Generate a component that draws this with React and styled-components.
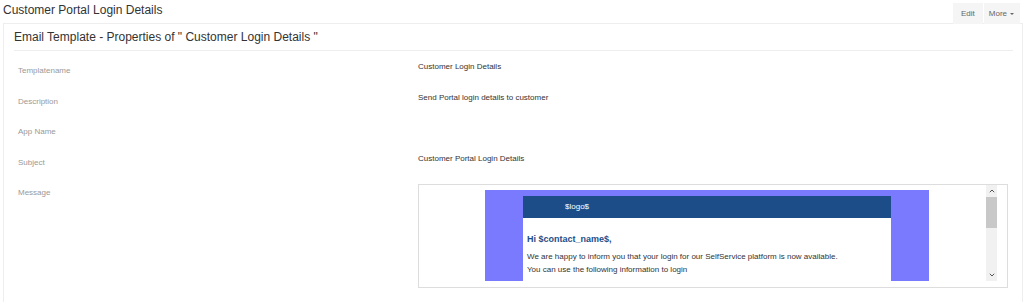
import React from "react";
import styled, { createGlobalStyle } from "styled-components";

const GlobalStyle = createGlobalStyle`
  html, body {
    margin: 0;
    padding: 0;
    background: #fff;
    font-family: "Liberation Sans", Arial, sans-serif;
    color: #333;
  }
`;

const Page = styled.div`
  padding: 0 1px 0 3px;
`;

const TopBar = styled.div`
  display: flex;
  justify-content: space-between;
  align-items: flex-start;
  height: 23px;
  padding-right: 3px;
`;

const Title = styled.div`
  font-size: 12px;
  line-height: 16px;
  padding-top: 2px;
  color: #333;
`;

const Actions = styled.div`
  display: flex;
  gap: 1px;
  margin-top: 3px;
`;

const ActionButton = styled.button`
  display: flex;
  align-items: center;
  gap: 3px;
  height: 21px;
  padding: 0 ${({ $caret }) => ($caret ? "6px 0 5px" : "8px")};
  border: none;
  background: #f5f5f5;
  color: #666;
  font-family: inherit;
  font-size: 8px;
  cursor: pointer;
`;

const Caret = styled.span`
  width: 0;
  height: 0;
  border-left: 2px solid transparent;
  border-right: 2px solid transparent;
  border-top: 2px solid #666;
`;

const Panel = styled.div`
  border: 1px solid #eee;
  border-bottom: none;
  padding: 0 9px 20px 10px;
`;

const PanelHeader = styled.div`
  font-size: 12px;
  line-height: 14px;
  padding: 6px 0;
  border-bottom: 1px solid #eee;
  color: #333;
`;

const Fields = styled.div`
  padding-top: 9px;
`;

const Row = styled.div`
  display: grid;
  grid-template-columns: 404px 1fr;
  min-height: 30.6px;
  font-size: 8px;
  line-height: 10px;
`;

const Label = styled.div`
  padding: 6px 4px 0;
  color: #999;
`;

const Value = styled.div`
  padding-top: 2px;
  color: #333;
`;

const MessageBox = styled.div`
  border: 1px solid #ddd;
  padding: 0 10px 6px 0;
  margin-right: 5px;
`;

const Frame = styled.div`
  display: flex;
  height: 96px;
`;

const Viewport = styled.div`
  flex: 1;
  overflow: hidden;
  display: flex;
  justify-content: center;
  padding: 5px 0 0 9px;
`;

const Outer = styled.div`
  width: 444px;
  flex: none;
  background: #7a7aff;
  padding: 6px 38px 40px;
  box-sizing: border-box;
  align-self: flex-start;
`;

const Card = styled.div`
  background: #fff;
`;

const LogoBar = styled.div`
  background: #1d4d89;
  color: #fff;
  height: 22px;
  display: flex;
  align-items: center;
  padding-left: 42px;
  font-size: 8px;
`;

const CardBody = styled.div`
  padding: 15px 4px 20px;
`;

const Greeting = styled.div`
  color: #1d4d89;
  font-weight: bold;
  font-size: 9px;
  line-height: 12px;
  margin-bottom: 5px;
`;

const Line = styled.div`
  font-size: 8px;
  line-height: 13px;
  color: #333;
`;

const Scrollbar = styled.div`
  width: 11px;
  flex: none;
  background: #f1f1f1;
  display: flex;
  flex-direction: column;
`;

const ScrollArrow = styled.div`
  height: 12px;
  display: flex;
  align-items: center;
  justify-content: center;
`;

const Thumb = styled.div`
  height: 31px;
  background: #c8c8c8;
`;

const Track = styled.div`
  flex: 1;
`;

const Chevron = ({ up }) => (
  <svg width="6" height="4" viewBox="0 0 6 4">
    <polyline
      points={up ? "0.8,3.2 3,1 5.2,3.2" : "0.8,0.8 3,3 5.2,0.8"}
      fill="none"
      stroke="#555"
      strokeWidth="1"
    />
  </svg>
);

const fields = [
  ["Templatename", "Customer Login Details"],
  ["Description", "Send Portal login details to customer"],
  ["App Name", ""],
  ["Subject", "Customer Portal Login Details"],
];

export default function App() {
  return (
    <Page>
      <GlobalStyle />
      <TopBar>
        <Title>Customer Portal Login Details</Title>
        <Actions>
          <ActionButton>Edit</ActionButton>
          <ActionButton $caret>
            More <Caret />
          </ActionButton>
        </Actions>
      </TopBar>
      <Panel>
        <PanelHeader>
          Email Template - Properties of " Customer Login Details "
        </PanelHeader>
        <Fields>
          {fields.map(([label, value]) => (
            <Row key={label}>
              <Label>{label}</Label>
              <Value>{value}</Value>
            </Row>
          ))}
          <Row>
            <Label>Message</Label>
            <Value>
              <MessageBox>
                <Frame>
                  <Viewport>
                    <Outer>
                      <Card>
                        <LogoBar>$logo$</LogoBar>
                        <CardBody>
                          <Greeting>Hi $contact_name$,</Greeting>
                          <Line>
                            We are happy to inform you that your login for our
                            SelfService platform is now available.
                          </Line>
                          <Line>You can use the following information to login</Line>
                        </CardBody>
                      </Card>
                    </Outer>
                  </Viewport>
                  <Scrollbar>
                    <ScrollArrow>
                      <Chevron up />
                    </ScrollArrow>
                    <Thumb />
                    <Track />
                    <ScrollArrow>
                      <Chevron />
                    </ScrollArrow>
                  </Scrollbar>
                </Frame>
              </MessageBox>
            </Value>
          </Row>
        </Fields>
      </Panel>
    </Page>
  );
}
